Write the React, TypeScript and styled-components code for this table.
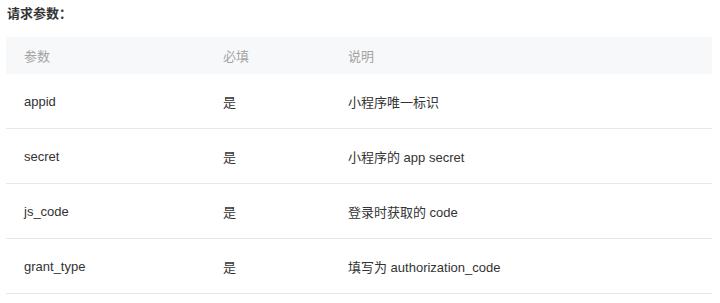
import * as React from "react";
import styled, { createGlobalStyle } from "styled-components";

type Param = {
  name: string;
  required: string;
  desc: string;
};

const params: Param[] = [
  { name: "appid", required: "是", desc: "小程序唯一标识" },
  { name: "secret", required: "是", desc: "小程序的 app secret" },
  { name: "js_code", required: "是", desc: "登录时获取的 code" },
  { name: "grant_type", required: "是", desc: "填写为 authorization_code" },
];

const GlobalStyle = createGlobalStyle`
  html, body {
    margin: 0;
    padding: 0;
    background: #ffffff;
  }
  body {
    font-family: "Liberation Sans", "Noto Sans CJK SC", sans-serif;
    -webkit-font-smoothing: antialiased;
  }
`;

export default function App() {
  return (
    <>
      <GlobalStyle />
      <Page>
        <Title>请求参数：</Title>
        <Table>
          <HeadRow>
            <HeadCell>参数</HeadCell>
            <HeadCell>必填</HeadCell>
            <HeadCell>说明</HeadCell>
          </HeadRow>
          {params.map((p) => (
            <Row key={p.name}>
              <Cell>{p.name}</Cell>
              <Cell>{p.required}</Cell>
              <Cell>{p.desc}</Cell>
            </Row>
          ))}
        </Table>
      </Page>
    </>
  );
}

const Page = styled.div`
  width: 706px;
  padding: 5px 8px 0 6px;
`;

const Title = styled.div`
  height: 18px;
  line-height: 18px;
  padding-left: 1px;
  font-size: 13px;
  font-weight: 700;
  color: #333333;
  margin-bottom: 14px;
`;

const Table = styled.div`
  display: flex;
  flex-direction: column;
`;

const HeadRow = styled.div`
  display: grid;
  grid-template-columns: 199px 125px 1fr;
  height: 37px;
  align-items: center;
  background: #f7f8fa;
`;

const Row = styled.div`
  display: grid;
  grid-template-columns: 199px 125px 1fr;
  height: 54px;
  align-items: center;
  border-bottom: 1px solid #e8e8e8;
`;

const HeadCell = styled.div`
  padding-left: 18px;
  font-size: 13px;
  color: #a3a3a3;
`;

const Cell = styled.div`
  padding-left: 18px;
  font-size: 13px;
  color: #333333;
`;
